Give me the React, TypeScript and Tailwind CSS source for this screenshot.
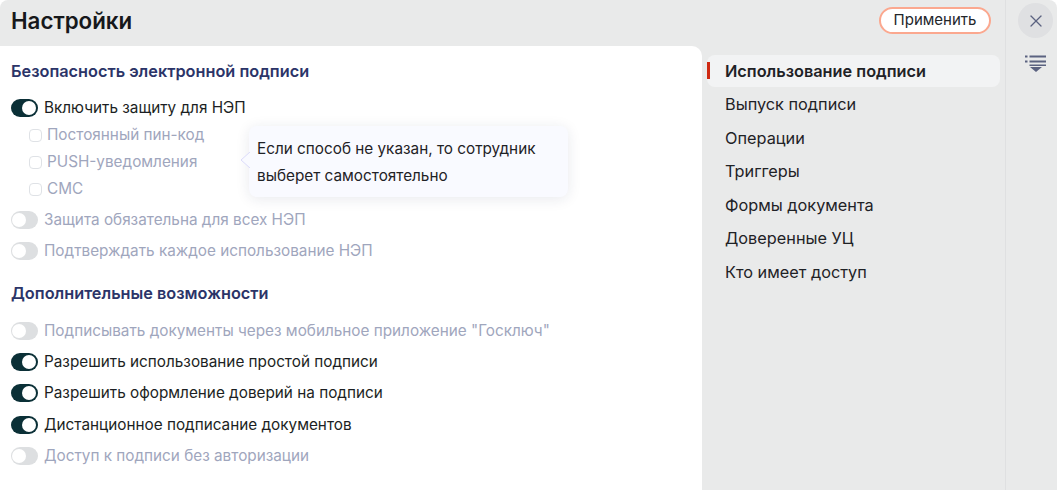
import { X } from "lucide-react";

const navItems = ["Использование подписи", "Выпуск подписи", "Операции", "Триггеры", "Формы документа", "Доверенные УЦ", "Кто имеет доступ"];

function Toggle({ label, on, className }: { label: string; on?: boolean; className?: string }) {
  return (
    <div className={`flex h-[22px] items-center gap-[6px] ${className ?? ""}`}>
      <div className={`flex h-[18px] w-[27px] shrink-0 items-center rounded-full ${on ? "justify-end bg-[#0b3037] pr-[2px]" : "bg-[#dddfe1] pl-[1px]"}`}>
        <div className="h-[14px] w-[14px] rounded-full bg-white" />
      </div>
      <span className={`text-[15.3px] whitespace-nowrap ${on ? "text-[#1c1f23]" : "text-[#9fa6bd]"}`}>{label}</span>
    </div>
  );
}

function Check({ label }: { label: string }) {
  return (
    <div className="flex h-[22px] items-center gap-[5px] pl-[18px]">
      <div className="h-[13px] w-[13px] rounded-[4px] border border-[#dfe2e6] bg-white" />
      <span className="text-[15.3px] text-[#9fa6bd]">{label}</span>
    </div>
  );
}

export default function App() {
  return (
    <div className="flex h-[490px] w-[1057px] overflow-hidden rounded-t-[8px] bg-[#e9eaea] font-['Inter',sans-serif]">
      <div className="flex w-[1005px] flex-col">
        <div className="flex h-[46px] shrink-0 items-center justify-between pr-[14px] pb-[5px] pl-[11px]">
          <h1 className="text-[22.3px] font-semibold text-[#16181b]">Настройки</h1>
          <button className="h-[27px] w-[112px] rounded-full border-2 border-[#fba88f] bg-white text-[15px] text-[#23262a]">Применить</button>
        </div>
        <div className="flex min-h-0 flex-1">
          <div className="relative w-[702px] rounded-tr-[10px] bg-white pt-[14px] pl-[11px]">
            <h2 className="h-[22px] text-[16.3px] leading-[22px] font-semibold text-[#2b3468]">Безопасность электронной подписи</h2>
            <Toggle on label="Включить защиту для НЭП" className="mt-[15px]" />
            <div className="mt-[5px] flex flex-col gap-[5px]">
              <Check label="Постоянный пин-код" />
              <Check label="PUSH-уведомления" />
              <Check label="СМС" />
            </div>
            <Toggle label="Защита обязательна для всех НЭП" className="mt-[9px]" />
            <Toggle label="Подтверждать каждое использование НЭП" className="mt-[9px]" />
            <h2 className="mt-[20px] h-[22px] text-[16.3px] leading-[22px] font-semibold text-[#2b3468]">Дополнительные возможности</h2>
            <Toggle label='Подписывать документы через мобильное приложение "Госключ"' className="mt-[16px]" />
            <Toggle on label="Разрешить использование простой подписи" className="mt-[9px]" />
            <Toggle on label="Разрешить оформление доверий на подписи" className="mt-[9px]" />
            <Toggle on label="Дистанционное подписание документов" className="mt-[10px]" />
            <Toggle label="Доступ к подписи без авторизации" className="mt-[9px]" />

            <div className="absolute top-[80px] left-[249px] h-[71px] w-[319px] rounded-[8px] bg-[#f9faff] px-[8px] py-[9px] text-[15.3px] leading-[27px] text-[#1f2226] shadow-[0_2px_14px_rgba(30,40,80,0.1)]">
              <svg className="absolute top-[26px] -left-[9px]" width="10" height="16" viewBox="0 0 10 16">
                <path d="M10 0 L1 8 L10 16 Z" fill="#f9faff" />
                <path d="M10 0 L1 8 L10 16" fill="none" stroke="#dcdcfa" />
              </svg>
              Если способ не указан, то сотрудник
              <br />
              выберет самостоятельно
            </div>
          </div>
          <nav className="flex-1 pt-[9px] pl-[5px]">
            {navItems.map((item, i) => (
              <div key={item} className={`relative flex h-[32px] w-[293px] items-center rounded-[8px] pl-[18px] text-[16.3px] text-[#1f2226] ${i === 0 ? "bg-[#f2f3f4] font-semibold" : ""} ${i > 0 ? "mt-[1.5px]" : ""}`}>
                {i === 0 && <div className="absolute top-[7px] left-0 h-[17px] w-[3px] bg-[#cf2a12]" />}
                {item}
              </div>
            ))}
          </nav>
        </div>
      </div>
      <div className="flex flex-1 flex-col items-start border-l border-l-[#dfe0e1] pt-[3px] pl-[12px]">
        <div className="flex h-[35px] w-[35px] items-center justify-center rounded-full bg-[#dfe0e2]">
          <X size={20} strokeWidth={1.5} className="text-[#5b6280]" />
        </div>
        <svg className="mt-[17px] ml-[7px]" width="21" height="17" viewBox="0 0 21 17" fill="#5b6280">
          <rect x="0" y="0.5" width="2.5" height="2" />
          <rect x="4.5" y="0.5" width="16.5" height="2" />
          <rect x="0" y="5.5" width="2.5" height="2" />
          <rect x="4.5" y="5.5" width="16.5" height="2" />
          <rect x="4.5" y="9.5" width="16.5" height="1.5" />
          <path d="M5 12 H17 L11 17 Z" />
        </svg>
      </div>
    </div>
  );
}
